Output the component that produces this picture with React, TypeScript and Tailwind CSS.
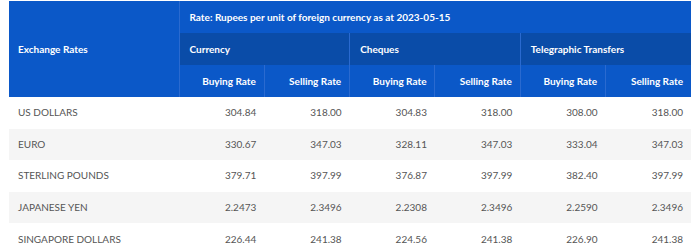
const rows: [string, string, string, string, string, string, string][] = [
  ["US DOLLARS", "304.84", "318.00", "304.83", "318.00", "308.00", "318.00"],
  ["EURO", "330.67", "347.03", "328.11", "347.03", "333.04", "347.03"],
  ["STERLING POUNDS", "379.71", "397.99", "376.87", "397.99", "382.40", "397.99"],
  ["JAPANESE YEN", "2.2473", "2.3496", "2.2308", "2.3496", "2.2590", "2.3496"],
  ["SINGAPORE DOLLARS", "226.44", "241.38", "224.56", "241.38", "226.90", "241.38"],
];

const groups = ["Currency", "Cheques", "Telegraphic Transfers"];

export default function App() {
  return (
    <div className="h-[251px] w-[700px] overflow-hidden bg-white pl-[9px] pt-px font-['Lato',sans-serif] text-[10px]">
      <table className="w-[682px] table-fixed border-collapse">
        <colgroup>
          <col className="w-[170px]" />
          {[0, 1, 2, 3, 4, 5].map((i) => (
            <col key={i} className="w-[85.33px]" />
          ))}
        </colgroup>
        <thead className="font-bold text-white">
          <tr className="h-[32px] bg-[#0b58c8]">
            <th rowSpan={3} className="border-r border-[#2a6ad0] px-[9px] text-left">
              Exchange Rates
            </th>
            <th colSpan={6} className="px-[10px] text-left">
              Rate: Rupees per unit of foreign currency as at 2023-05-15
            </th>
          </tr>
          <tr className="h-[32px] bg-[#0a4ca8]">
            {groups.map((g, i) => (
              <th
                key={g}
                colSpan={2}
                className={"px-[10px] text-left " + (i < 2 ? "border-r border-[#2a6ad0]" : "")}
              >
                {g}
              </th>
            ))}
          </tr>
          <tr className="h-[32px] bg-[#0b58c8]">
            {[0, 1, 2, 3, 4, 5].map((i) => (
              <th
                key={i}
                className={"px-[8px] text-right " + (i < 5 ? "border-r border-[#2a6ad0]" : "")}
              >
                {i % 2 === 0 ? "Buying Rate" : "Selling Rate"}
              </th>
            ))}
          </tr>
        </thead>
        <tbody className="text-[#555555]">
          {rows.map((r, idx) => (
            <tr key={r[0]} className={"h-[31.6px] " + (idx % 2 === 1 ? "bg-[#f5f5f5]" : "bg-white")}>
              <td className="px-[9px] text-left">{r[0]}</td>
              {r.slice(1).map((v, i) => (
                <td key={i} className="px-[8px] text-right">
                  {v}
                </td>
              ))}
            </tr>
          ))}
        </tbody>
      </table>
    </div>
  );
}
